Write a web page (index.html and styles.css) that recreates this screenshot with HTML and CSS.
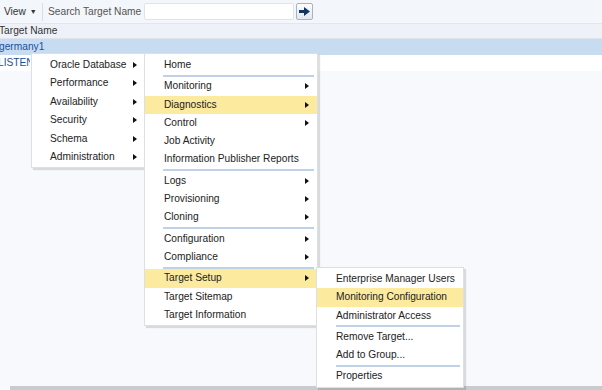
FILE: index.html
```html
<!DOCTYPE html>
<html lang="en">
<head>
    <meta charset="UTF-8">
    <title>Targets</title>
    <link rel="stylesheet" href="styles.css">
</head>
<body>
    <div class="toolbar">
        <span class="view-btn">View <span class="caret">&#9660;</span></span>
        <span class="tb-sep"></span>
        <label class="search-label">Search Target Name</label>
        <span class="search-box"></span>
        <span class="go-btn">
            <svg width="11" height="9" viewBox="0 0 11 9"><path d="M0 3h5V0l6 4.5L5 9V6H0z" fill="#13345e"/></svg>
        </span>
    </div>
    <div class="grid">
        <div class="grid-head">Target Name</div>
        <div class="grid-row selected">germany1</div>
        <div class="grid-row"><span class="clip">LISTENER_germany1</span></div>
    </div>
    <div class="hscroll"></div>

    <!-- target menu -->
    <div class="menu menu-type">
        <div class="item sub">Oracle Database</div>
        <div class="item sub">Performance</div>
        <div class="item sub">Availability</div>
        <div class="item sub">Security</div>
        <div class="item sub">Schema</div>
        <div class="item sub">Administration</div>
    </div>

    <div class="menu menu-main">
        <div class="item">Home</div>
        <div class="sep"></div>
        <div class="item sub">Monitoring</div>
        <div class="item sub hot">Diagnostics</div>
        <div class="item sub">Control</div>
        <div class="item">Job Activity</div>
        <div class="item">Information Publisher Reports</div>
        <div class="sep"></div>
        <div class="item sub">Logs</div>
        <div class="item sub">Provisioning</div>
        <div class="item sub">Cloning</div>
        <div class="sep"></div>
        <div class="item sub">Configuration</div>
        <div class="item sub">Compliance</div>
        <div class="sep"></div>
        <div class="item sub hot">Target Setup</div>
        <div class="item">Target Sitemap</div>
        <div class="item">Target Information</div>
    </div>

    <div class="menu menu-setup">
        <div class="item">Enterprise Manager Users</div>
        <div class="item hot">Monitoring Configuration</div>
        <div class="item">Administrator Access</div>
        <div class="sep"></div>
        <div class="item">Remove Target...</div>
        <div class="item">Add to Group...</div>
        <div class="sep"></div>
        <div class="item">Properties</div>
    </div>
</body>
</html>
```

FILE: styles.css
```css
body {
    margin: 0;
    font-family: "Liberation Sans", Arial, sans-serif;
    font-size: 10.2px;
    color: #333;
    background-color: #f7f9fc;
    width: 602px;
    height: 390px;
    overflow: hidden;
    position: relative;
}
.toolbar {
    height: 24px;
    display: flex;
    align-items: center;
    background-color: #f3f6fa;
    border-bottom: 1px solid #e1e7ef;
    box-sizing: border-box;
    padding-left: 4px;
    white-space: nowrap;
}
.view-btn {
    color: #333;
    width: 33px;
}
.caret {
    font-size: 7px;
    vertical-align: 1px;
    margin-left: 1px;
}
.tb-sep {
    width: 1px;
    height: 18px;
    background-color: #d7dee8;
    margin: 0 5px 0 5px;
}
.search-label {
    color: #555;
    width: 96px;
}
.search-box {
    width: 148px;
    height: 15px;
    background-color: #fff;
    border: 1px solid #dfe4eb;
    border-radius: 2px;
}
.go-btn {
    width: 15px;
    height: 15px;
    margin-left: 2px;
    border: 1px solid #a9b3bf;
    border-radius: 2px;
    background: linear-gradient(#fdfdfe, #e3e8ef);
    display: flex;
    align-items: center;
    justify-content: center;
}
.grid-head {
    height: 14px;
    line-height: 14px;
    background-color: #eef2f8;
    border-bottom: 1px solid #dde4ee;
    text-indent: -1px;
    color: #333;
}
.grid-row {
    height: 16px;
    line-height: 16px;
    background-color: #fff;
    color: #1c4f9c;
    text-indent: -1px;
}
.grid-row.selected {
    background-color: #c7dcf1;
}
.grid-row .clip {
    display: inline-block;
    width: 31px;
    overflow: hidden;
    white-space: nowrap;
    vertical-align: top;
}
.hscroll {
    position: absolute;
    left: 10px;
    right: 0;
    bottom: 0;
    height: 4px;
    background-color: #c9cbcf;
}
.menu {
    position: absolute;
    background-color: #fff;
    border: 1px solid #dcdfe4;
    box-shadow: 2px 2px 1px rgba(0,0,0,0.12);
    padding: 2px 0 1px;
    color: #222;
}
.menu .item {
    height: 18.3px;
    line-height: 18.3px;
    position: relative;
    white-space: nowrap;
}
.menu .item.hot {
    background-color: #fcea9f;
}
.menu .item.sub::after {
    content: "";
    position: absolute;
    top: 6px;
    right: 8px;
    border-left: 4px solid #111;
    border-top: 3.5px solid transparent;
    border-bottom: 3.5px solid transparent;
}
.menu .sep {
    height: 2px;
    margin: 0.5px 3px 0.5px 18px;
    background-color: #bfd1e6;
}
.menu-type {
    left: 31px;
    top: 53px;
    width: 113px;
}
.menu-type .item {
    height: 18.4px;
    line-height: 18.4px;
    padding-left: 18px;
}
.menu-main {
    left: 144px;
    top: 53px;
    width: 172px;
}
.menu-main .item {
    padding-left: 19px;
}
.menu-setup {
    left: 316px;
    top: 267px;
    width: 146px;
}
.menu-setup .item {
    padding-left: 19px;
}
.menu-setup .sep {
    margin-left: 19px;
}
```
